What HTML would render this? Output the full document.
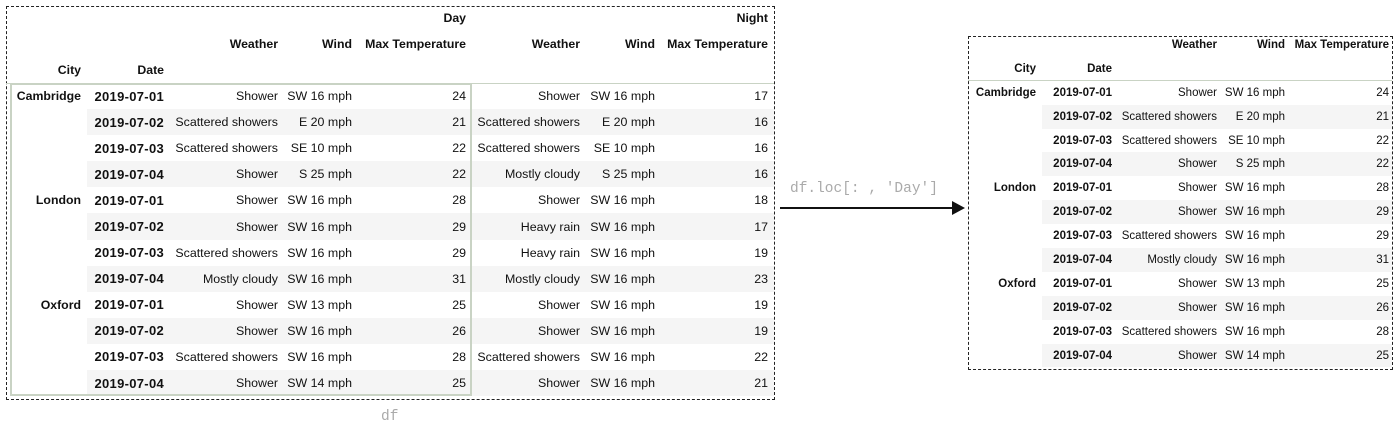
<!DOCTYPE html>
<html><head><meta charset="utf-8"><style>
body{margin:0;width:1400px;height:435px;background:#fff;position:relative;overflow:hidden;font-family:"Liberation Sans",sans-serif;color:#111}
.box{position:absolute;border:1.6px dashed #222;box-sizing:border-box}
table{position:absolute;border-collapse:collapse;table-layout:fixed}
td,th{padding:0 6px 0 0;text-align:right;white-space:nowrap;overflow:visible}
#L{left:6px;top:5px;font-size:12.4px}
#L tr{height:26.1px}
#L tr.h{height:26px}
#L th{font-weight:bold;font-size:12.3px}
#L td.c{font-weight:bold;font-size:12.3px}
#L td.d{font-weight:bold;font-size:13px;letter-spacing:0.3px}
.s td:not(.c){background:#f5f5f5}
#R{left:968px;top:33px;font-size:11.5px}
#R tr{height:23.9px}
#R th,#R td.d,#R td.c{font-weight:bold}
.mono{position:absolute;font-family:"Liberation Mono",monospace;color:#aaa;font-size:14.5px}
</style></head><body>
<div class="box" style="left:6px;top:6px;width:769px;height:394px;"></div>
<table id="L">
<colgroup><col style="width:81px"><col style="width:83px"><col style="width:114px"><col style="width:74px"><col style="width:114px"><col style="width:114px"><col style="width:75px"><col style="width:113px"></colgroup>
<tr class="h"><th></th><th></th><th></th><th></th><th>Day</th><th></th><th></th><th>Night</th></tr>
<tr class="h"><th></th><th></th><th>Weather</th><th>Wind</th><th>Max Temperature</th><th>Weather</th><th>Wind</th><th>Max Temperature</th></tr>
<tr class="h" style="border-bottom:1.5px solid #c9d3c4"><th>City</th><th>Date</th><th></th><th></th><th></th><th></th><th></th><th></th></tr>
<tr><td class="c">Cambridge</td><td class="d">2019-07-01</td><td>Shower</td><td>SW 16 mph</td><td>24</td><td>Shower</td><td>SW 16 mph</td><td>17</td></tr>
<tr class="s"><td class="c"></td><td class="d">2019-07-02</td><td>Scattered showers</td><td>E 20 mph</td><td>21</td><td>Scattered showers</td><td>E 20 mph</td><td>16</td></tr>
<tr><td class="c"></td><td class="d">2019-07-03</td><td>Scattered showers</td><td>SE 10 mph</td><td>22</td><td>Scattered showers</td><td>SE 10 mph</td><td>16</td></tr>
<tr class="s"><td class="c"></td><td class="d">2019-07-04</td><td>Shower</td><td>S 25 mph</td><td>22</td><td>Mostly cloudy</td><td>S 25 mph</td><td>16</td></tr>
<tr><td class="c">London</td><td class="d">2019-07-01</td><td>Shower</td><td>SW 16 mph</td><td>28</td><td>Shower</td><td>SW 16 mph</td><td>18</td></tr>
<tr class="s"><td class="c"></td><td class="d">2019-07-02</td><td>Shower</td><td>SW 16 mph</td><td>29</td><td>Heavy rain</td><td>SW 16 mph</td><td>17</td></tr>
<tr><td class="c"></td><td class="d">2019-07-03</td><td>Scattered showers</td><td>SW 16 mph</td><td>29</td><td>Heavy rain</td><td>SW 16 mph</td><td>19</td></tr>
<tr class="s"><td class="c"></td><td class="d">2019-07-04</td><td>Mostly cloudy</td><td>SW 16 mph</td><td>31</td><td>Mostly cloudy</td><td>SW 16 mph</td><td>23</td></tr>
<tr><td class="c">Oxford</td><td class="d">2019-07-01</td><td>Shower</td><td>SW 13 mph</td><td>25</td><td>Shower</td><td>SW 16 mph</td><td>19</td></tr>
<tr class="s"><td class="c"></td><td class="d">2019-07-02</td><td>Shower</td><td>SW 16 mph</td><td>26</td><td>Shower</td><td>SW 16 mph</td><td>19</td></tr>
<tr><td class="c"></td><td class="d">2019-07-03</td><td>Scattered showers</td><td>SW 16 mph</td><td>28</td><td>Scattered showers</td><td>SW 16 mph</td><td>22</td></tr>
<tr class="s"><td class="c"></td><td class="d">2019-07-04</td><td>Shower</td><td>SW 14 mph</td><td>25</td><td>Shower</td><td>SW 16 mph</td><td>21</td></tr>
</table>
<div style="position:absolute;left:10px;top:83px;width:462px;height:313px;border:2.5px solid #c9d3c4;box-sizing:border-box"></div>
<div class="mono" style="left:381px;top:409px">df</div>
<div class="mono" style="left:790px;top:181px">df.loc[: , 'Day']</div>
<div style="position:absolute;left:780px;top:207px;width:176px;height:2px;background:#111"></div>
<svg style="position:absolute;left:952px;top:201px" width="14" height="14"><polygon points="0,0 13,7 0,14" fill="#111"/></svg>
<div class="box" style="left:968px;top:36px;width:425px;height:334px;"></div>
<table id="R">
<colgroup><col style="width:74px"><col style="width:76px"><col style="width:105px"><col style="width:68px"><col style="width:101px"></colgroup>
<tr><th></th><th></th><th>Weather</th><th>Wind</th><th style="padding-right:3px">Max Temperature</th></tr>
<tr style="border-bottom:1.5px solid #c9d3c4"><th>City</th><th>Date</th><th></th><th></th><th></th></tr>
<tr><td class="c">Cambridge</td><td class="d">2019-07-01</td><td>Shower</td><td>SW 16 mph</td><td style="padding-right:3px">24</td></tr>
<tr class="s"><td class="c"></td><td class="d">2019-07-02</td><td>Scattered showers</td><td>E 20 mph</td><td style="padding-right:3px">21</td></tr>
<tr><td class="c"></td><td class="d">2019-07-03</td><td>Scattered showers</td><td>SE 10 mph</td><td style="padding-right:3px">22</td></tr>
<tr class="s"><td class="c"></td><td class="d">2019-07-04</td><td>Shower</td><td>S 25 mph</td><td style="padding-right:3px">22</td></tr>
<tr><td class="c">London</td><td class="d">2019-07-01</td><td>Shower</td><td>SW 16 mph</td><td style="padding-right:3px">28</td></tr>
<tr class="s"><td class="c"></td><td class="d">2019-07-02</td><td>Shower</td><td>SW 16 mph</td><td style="padding-right:3px">29</td></tr>
<tr><td class="c"></td><td class="d">2019-07-03</td><td>Scattered showers</td><td>SW 16 mph</td><td style="padding-right:3px">29</td></tr>
<tr class="s"><td class="c"></td><td class="d">2019-07-04</td><td>Mostly cloudy</td><td>SW 16 mph</td><td style="padding-right:3px">31</td></tr>
<tr><td class="c">Oxford</td><td class="d">2019-07-01</td><td>Shower</td><td>SW 13 mph</td><td style="padding-right:3px">25</td></tr>
<tr class="s"><td class="c"></td><td class="d">2019-07-02</td><td>Shower</td><td>SW 16 mph</td><td style="padding-right:3px">26</td></tr>
<tr><td class="c"></td><td class="d">2019-07-03</td><td>Scattered showers</td><td>SW 16 mph</td><td style="padding-right:3px">28</td></tr>
<tr class="s"><td class="c"></td><td class="d">2019-07-04</td><td>Shower</td><td>SW 14 mph</td><td style="padding-right:3px">25</td></tr>
</table>
</body></html>
